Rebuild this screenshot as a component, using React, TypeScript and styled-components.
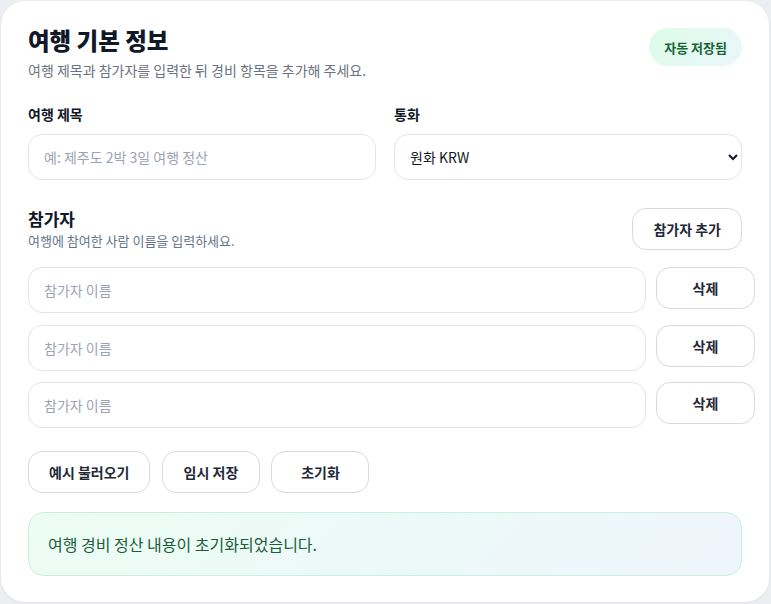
import styled, { createGlobalStyle } from "styled-components";

const GlobalStyle = createGlobalStyle`
  * { box-sizing: border-box; }
  body {
    margin: 0;
    background: #eceef1;
    font-family: "Noto Sans CJK KR", "Noto Sans", sans-serif;
    color: #111827;
  }
`;

const participants = ["", "", ""];
const actions = ["예시 불러오기", "임시 저장", "초기화"];

export default function App() {
  return (
    <>
      <GlobalStyle />
      <Card>
        <Header>
          <div>
            <Title>여행 기본 정보</Title>
            <Subtitle>여행 제목과 참가자를 입력한 뒤 경비 항목을 추가해 주세요.</Subtitle>
          </div>
          <Badge>자동 저장됨</Badge>
        </Header>

        <Fields>
          <Field>
            <Label>여행 제목</Label>
            <TextInput placeholder="예: 제주도 2박 3일 여행 정산" />
          </Field>
          <Field>
            <Label>통화</Label>
            <Select defaultValue="KRW">
              <option value="KRW">원화 KRW</option>
              <option value="USD">달러 USD</option>
              <option value="JPY">엔화 JPY</option>
            </Select>
          </Field>
        </Fields>

        <SectionHead>
          <div>
            <SectionTitle>참가자</SectionTitle>
            <SectionHint>여행에 참여한 사람 이름을 입력하세요.</SectionHint>
          </div>
          <Button>참가자 추가</Button>
        </SectionHead>

        <List>
          {participants.map((name, i) => (
            <Row key={i}>
              <TextInput placeholder="참가자 이름" defaultValue={name} />
              <Button $wide>삭제</Button>
            </Row>
          ))}
        </List>

        <Actions>
          {actions.map((label) => (
            <Button key={label}>{label}</Button>
          ))}
        </Actions>

        <Notice>여행 경비 정산 내용이 초기화되었습니다.</Notice>
      </Card>
    </>
  );
}

const Card = styled.section`
  margin: 1px;
  width: 768px;
  padding: 22px 27px 26px;
  background: #ffffff;
  border-radius: 24px;
  box-shadow: 0 1px 3px rgba(15, 23, 42, 0.06);
`;

const Header = styled.div`
  display: flex;
  justify-content: space-between;
  align-items: flex-start;
`;

const Title = styled.h1`
  margin: 0;
  font-size: 23.5px;
  font-weight: 800;
  line-height: 34px;
  color: #111827;
`;

const Subtitle = styled.p`
  margin: 3px 0 0;
  font-size: 14px;
  line-height: 21px;
  color: #6b7280;
`;

const Badge = styled.span`
  display: inline-flex;
  align-items: center;
  height: 38px;
  margin-top: 5px;
  padding: 0 15px;
  border-radius: 999px;
  background: linear-gradient(135deg, #dcfce7, #ecf6fb);
  color: #166534;
  font-size: 13px;
  font-weight: 700;
`;

const Fields = styled.div`
  display: grid;
  grid-template-columns: 1fr 1fr;
  gap: 18px;
  margin-top: 23px;
`;

const Field = styled.label`
  display: flex;
  flex-direction: column;
  gap: 9px;
`;

const Label = styled.span`
  font-size: 14px;
  font-weight: 700;
  line-height: 21px;
  color: #111827;
`;

const TextInput = styled.input`
  flex: 1;
  min-width: 0;
  height: 46px;
  padding: 0 15px;
  border: 1px solid #e3e5ec;
  border-radius: 14px;
  background: #fff;
  font-family: inherit;
  font-size: 14px;
  color: #111827;
  outline: none;
  &::placeholder {
    color: #9ca3b4;
  }
`;

const Select = styled.select`
  height: 46px;
  padding: 0 11px;
  border: 1px solid #e3e5ec;
  border-radius: 14px;
  background: #fff;
  font-family: inherit;
  font-size: 14px;
  color: #111827;
  outline: none;
`;

const SectionHead = styled.div`
  display: flex;
  justify-content: space-between;
  align-items: center;
  margin-top: 28px;
`;

const SectionTitle = styled.h2`
  margin: 0;
  font-size: 17px;
  font-weight: 700;
  line-height: 22px;
  color: #111827;
`;

const SectionHint = styled.p`
  margin: 1px 0 0;
  font-size: 13px;
  line-height: 19px;
  color: #64748b;
`;

const Button = styled.button<{ $wide?: boolean }>`
  height: 42px;
  min-width: ${(p) => (p.$wide ? "99px" : "98px")};
  padding: 0 20px;
  border: 1px solid #d7d9e0;
  border-radius: 14px;
  background: #fff;
  font-family: inherit;
  font-size: 14px;
  font-weight: 700;
  color: #1f2937;
  cursor: pointer;
`;

const List = styled.div`
  display: flex;
  flex-direction: column;
  gap: 11.5px;
  margin-top: 17px;
`;

const Row = styled.div`
  display: flex;
  align-items: flex-start;
  gap: 10px;
  width: calc(100% + 13px);
`;

const Actions = styled.div`
  display: flex;
  gap: 11.5px;
  margin-top: 23px;
`;

const Notice = styled.div`
  display: flex;
  align-items: center;
  height: 64px;
  margin-top: 19px;
  padding: 0 19px;
  border: 1px solid #c8f0dc;
  border-radius: 16px;
  background: linear-gradient(135deg, #ecfdf3, #eef5fd);
  font-size: 16px;
  color: #1b5e3b;
`;
